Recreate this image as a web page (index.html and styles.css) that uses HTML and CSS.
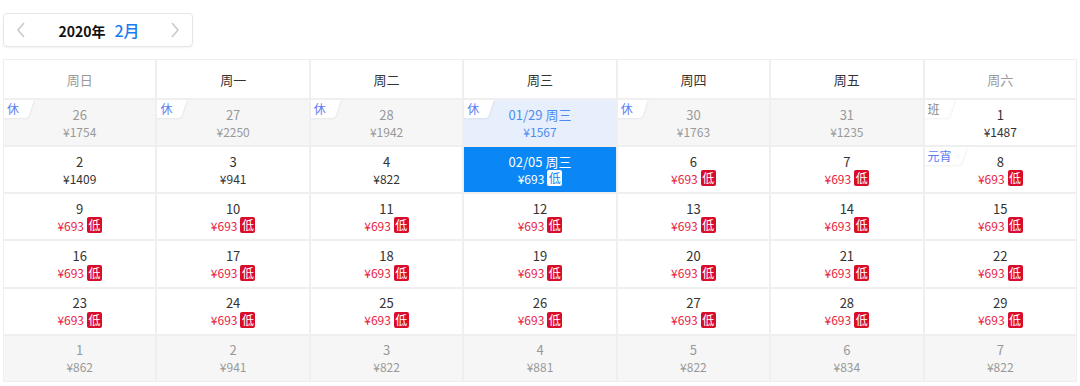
FILE: index.html
```html
<!DOCTYPE html>
<html lang="zh">
<head>
<meta charset="utf-8">
<link rel="stylesheet" href="styles.css">
</head>
<body>
<div class="page">
  <div class="month-bar">
    <span class="arrow">
      <svg width="10" height="16" viewBox="0 0 10 16"><path d="M8 1 L2 8 L8 15" fill="none" stroke="#c8c8c8" stroke-width="1.5"/></svg>
    </span>
    <span class="title"><span class="year">2020年</span><span class="month">2月</span></span>
    <span class="arrow">
      <svg width="10" height="16" viewBox="0 0 10 16"><path d="M2 1 L8 8 L2 15" fill="none" stroke="#c8c8c8" stroke-width="1.5"/></svg>
    </span>
  </div>

  <div class="cal">
    <div class="wk weekend">周日</div>
    <div class="wk">周一</div>
    <div class="wk">周二</div>
    <div class="wk">周三</div>
    <div class="wk">周四</div>
    <div class="wk">周五</div>
    <div class="wk weekend">周六</div>

    <div class="cell other"><span class="tag">休</span><div class="d">26</div><div class="p">¥1754</div></div>
    <div class="cell other"><span class="tag">休</span><div class="d">27</div><div class="p">¥2250</div></div>
    <div class="cell other"><span class="tag">休</span><div class="d">28</div><div class="p">¥1942</div></div>
    <div class="cell depart"><span class="tag">休</span><div class="d">01/29 周三</div><div class="p">¥1567</div></div>
    <div class="cell other"><span class="tag">休</span><div class="d">30</div><div class="p">¥1763</div></div>
    <div class="cell other"><div class="d">31</div><div class="p">¥1235</div></div>
    <div class="cell"><span class="tag work">班</span><div class="d">1</div><div class="p">¥1487</div></div>

    <div class="cell"><div class="d">2</div><div class="p">¥1409</div></div>
    <div class="cell"><div class="d">3</div><div class="p">¥941</div></div>
    <div class="cell"><div class="d">4</div><div class="p">¥822</div></div>
    <div class="cell active"><div class="d">02/05 周三</div><div class="p">¥693<span class="low">低</span></div></div>
    <div class="cell"><div class="d">6</div><div class="p red">¥693<span class="low">低</span></div></div>
    <div class="cell"><div class="d">7</div><div class="p red">¥693<span class="low">低</span></div></div>
    <div class="cell"><span class="tag">元宵</span><div class="d">8</div><div class="p red">¥693<span class="low">低</span></div></div>

    <div class="cell"><div class="d">9</div><div class="p red">¥693<span class="low">低</span></div></div>
    <div class="cell"><div class="d">10</div><div class="p red">¥693<span class="low">低</span></div></div>
    <div class="cell"><div class="d">11</div><div class="p red">¥693<span class="low">低</span></div></div>
    <div class="cell"><div class="d">12</div><div class="p red">¥693<span class="low">低</span></div></div>
    <div class="cell"><div class="d">13</div><div class="p red">¥693<span class="low">低</span></div></div>
    <div class="cell"><div class="d">14</div><div class="p red">¥693<span class="low">低</span></div></div>
    <div class="cell"><div class="d">15</div><div class="p red">¥693<span class="low">低</span></div></div>

    <div class="cell"><div class="d">16</div><div class="p red">¥693<span class="low">低</span></div></div>
    <div class="cell"><div class="d">17</div><div class="p red">¥693<span class="low">低</span></div></div>
    <div class="cell"><div class="d">18</div><div class="p red">¥693<span class="low">低</span></div></div>
    <div class="cell"><div class="d">19</div><div class="p red">¥693<span class="low">低</span></div></div>
    <div class="cell"><div class="d">20</div><div class="p red">¥693<span class="low">低</span></div></div>
    <div class="cell"><div class="d">21</div><div class="p red">¥693<span class="low">低</span></div></div>
    <div class="cell"><div class="d">22</div><div class="p red">¥693<span class="low">低</span></div></div>

    <div class="cell"><div class="d">23</div><div class="p red">¥693<span class="low">低</span></div></div>
    <div class="cell"><div class="d">24</div><div class="p red">¥693<span class="low">低</span></div></div>
    <div class="cell"><div class="d">25</div><div class="p red">¥693<span class="low">低</span></div></div>
    <div class="cell"><div class="d">26</div><div class="p red">¥693<span class="low">低</span></div></div>
    <div class="cell"><div class="d">27</div><div class="p red">¥693<span class="low">低</span></div></div>
    <div class="cell"><div class="d">28</div><div class="p red">¥693<span class="low">低</span></div></div>
    <div class="cell"><div class="d">29</div><div class="p red">¥693<span class="low">低</span></div></div>

    <div class="cell other"><div class="d">1</div><div class="p">¥862</div></div>
    <div class="cell other"><div class="d">2</div><div class="p">¥941</div></div>
    <div class="cell other"><div class="d">3</div><div class="p">¥822</div></div>
    <div class="cell other"><div class="d">4</div><div class="p">¥881</div></div>
    <div class="cell other"><div class="d">5</div><div class="p">¥822</div></div>
    <div class="cell other"><div class="d">6</div><div class="p">¥834</div></div>
    <div class="cell other"><div class="d">7</div><div class="p">¥822</div></div>
  </div>
</div>
</body>
</html>
```

FILE: styles.css
```css
html, body {
  margin: 0;
  padding: 0;
  background: #fff;
}
body {
  font-family: "Noto Sans CJK SC", "Noto Sans", sans-serif;
  color: #333;
}
.page {
  padding: 13px 3px 0 3px;
}
.month-bar {
  box-sizing: border-box;
  width: 190px;
  height: 34px;
  border: 1px solid #e6e6e6;
  border-radius: 4px;
  box-shadow: 0 1px 2px rgba(0,0,0,0.05);
  display: flex;
  align-items: center;
  justify-content: space-between;
  padding: 0 12px 0 12px;
}
.arrow {
  display: flex;
  align-items: center;
}
.title {
  display: flex;
  align-items: baseline;
  gap: 9px;
  margin-left: 2px;
}
.year {
  font-size: 14px;
  font-weight: bold;
  color: #111;
}
.month {
  font-size: 16px;
  font-weight: 500;
  color: #1a7cf0;
}
.cal {
  margin-top: 12px;
  width: 1074px;
  display: grid;
  grid-template-columns: repeat(7, 1fr);
  grid-template-rows: 40px repeat(6, 47.17px);
}
.wk, .cell {
  box-sizing: border-box;
  border: 1px solid #efefef;
  display: flex;
  flex-direction: column;
  align-items: center;
  justify-content: center;
}
.wk {
  font-size: 13px;
  color: #333;
}
.wk.weekend {
  color: #999;
}
.cell {
  position: relative;
  overflow: hidden;
  line-height: 17px;
}
.d {
  font-size: 13px;
}
.p {
  font-size: 12px;
  display: flex;
  align-items: center;
}
.p.red {
  color: #e8233f;
}
.low {
  display: inline-block;
  width: 15px;
  height: 16px;
  line-height: 16px;
  margin-left: 3px;
  background: #d80d2c;
  color: #fff;
  font-size: 12px;
  text-align: center;
  border-radius: 2px;
}
.other {
  background: #f6f6f6;
  color: #999;
}
.depart {
  background: #e6effb;
  color: #4e8cf0;
}
.active {
  background: #0a87f5;
  color: #fff;
}
.active .low {
  background: #fff;
  color: #0a87f5;
}
.tag {
  position: absolute;
  z-index: 1;
  top: 0;
  left: 0;
  height: 18px;
  line-height: 17px;
  padding: 0 9px 0 3px;
  font-size: 12px;
  color: #5a7cf5;
}
.tag::before {
  content: "";
  position: absolute;
  z-index: -1;
  top: 0;
  bottom: 0;
  left: -8px;
  right: 0;
  background: #fff;
  transform: skewX(-18deg);
  transform-origin: bottom left;
  border-bottom-right-radius: 3px;
  box-shadow: 1px 1px 2px rgba(0,0,0,0.06);
}
.tag.work {
  color: #888;
}
```
